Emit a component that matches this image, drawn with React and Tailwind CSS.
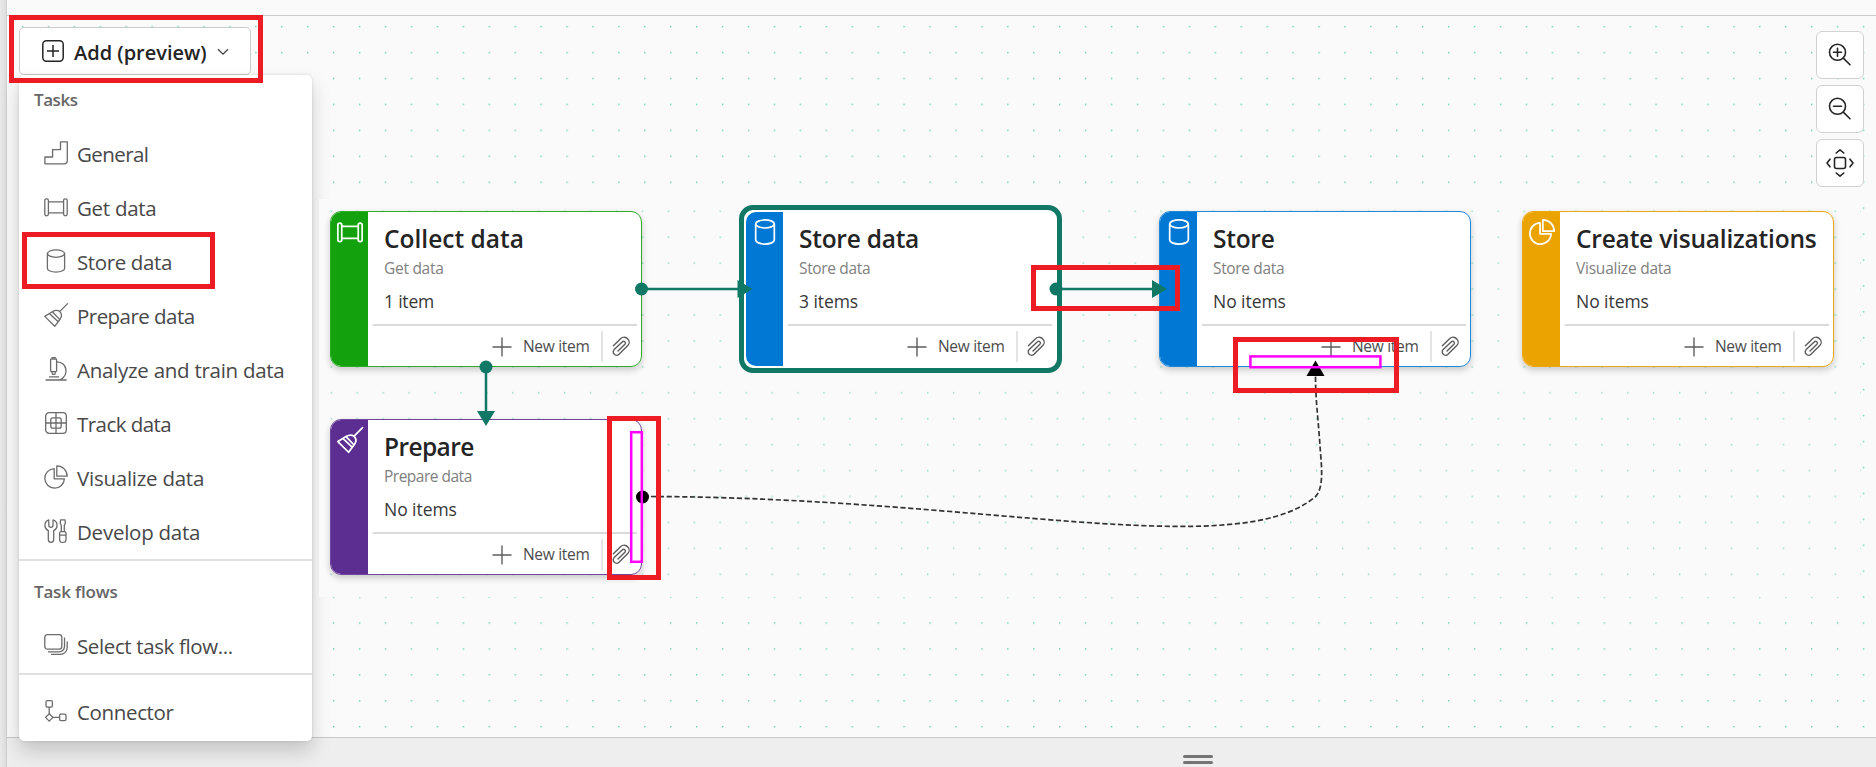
const Svg = ({ size = 24, sw = 1.3, children, className = "" }) => (
  <svg width={size} height={size} viewBox="0 0 24 24" fill="none" stroke="currentColor" strokeWidth={sw} strokeLinejoin="round" className={`shrink-0 overflow-visible ${className}`}>
    {children}
  </svg>
);

const shapes = {
  general: <path d="M16.5.8H23.3V19.5a3.3 3.3 0 0 1-3.3 3.3H.9V16H8.6V8.6H16.5Z" />,
  get: (
    <>
      <rect x=".8" y="3.8" width="3.6" height="17" rx="1.7" />
      <rect x="19.6" y="3.8" width="3.6" height="17" rx="1.7" />
      <path d="M4.4 6.8H19.6M4.4 17.8H19.6" />
    </>
  ),
  store: (
    <>
      <ellipse cx="12" cy="4.6" rx="8.6" ry="3.7" />
      <path d="M3.4 4.6V19.4c0 2 3.9 3.7 8.6 3.7s8.6-1.7 8.6-3.7V4.6" />
    </>
  ),
  prepare: (
    <>
      <path d="M23.6.6 15.8 8.4" strokeLinecap="round" />
      <path d="M.8 13.4 8.3 8.8C11.2 7 14 7.2 15.8 8.6c2 2 2 5 .4 7.4L10.7 23.3Z" />
      <path d="M5.4 10.6 14.2 18.8" />
      <path d="M8.3 8.8 15.8 16.6" />
    </>
  ),
  analyze: (
    <>
      <rect x="6.6" y="2" width="6" height="12.6" rx=".8" />
      <path d="M7.5.7H11.8M7.8 14.8 8.6 17.4H10.8L11.4 14.8M5 19.8H15M1.6 23H22.6M12.8 4.8C23.6 5.4 25 17.6 16.4 22.8" />
    </>
  ),
  track: (
    <>
      <rect x="1.7" y="1.7" width="20.6" height="20.6" rx="3.4" />
      <rect x="6.8" y="6.8" width="10.4" height="10.4" rx="2" />
      <path d="M12 1.7V22.3M1.7 12H22.3" />
    </>
  ),
  visualize: (
    <>
      <path d="M10.2 3.6A9.8 9.8 0 1 0 20.4 13.8H10.2Z" />
      <path d="M12.8.8A10.4 10.4 0 0 1 23.2 11.2H12.8Z" />
    </>
  ),
  develop: (
    <>
      <path d="M4.8.9V6.2a2.1 2.1 0 0 0 4.2 0V.9C11.6 1.8 13.1 4 13.1 6.4c0 2.3-1.2 4-3.4 5.2v9a2.7 2.7 0 0 1-5.4 0v-9C2.1 10.4.9 8.7.9 6.4.9 4 2.3 1.8 4.8.9Z" />
      <path d="M16.6.8H21L21.4 4.4 20.3 6V12.6H17.3V6L16.2 4.4ZM15.6 14.2q0-1.6 1.6-1.6h3.2q1.6 0 1.6 1.6v6a3.2 3.2 0 0 1-6.4 0ZM15.6 16.2H22" />
    </>
  ),
  select: (
    <>
      <rect x=".8" y="1.7" width="17" height="14.4" rx="2.6" />
      <path d="M20.5 4.6V13.6a5.2 5.2 0 0 1-5.2 5.2H4M23.2 8.4V14.6a6.8 6.8 0 0 1-6.8 6.8H7" />
    </>
  ),
  connector: (
    <>
      <rect x="2" y="1.7" width="6.4" height="6.4" rx="1.4" />
      <rect x="15.6" y="15.2" width="6.4" height="6.4" rx="1.4" />
      <path d="M5.2 8.1V14.7M8.9 18.4H15.6M5.2 14.7 8.9 18.4 5.2 22.1 1.5 18.4Z" />
    </>
  ),
};

const tasks = [
  ["general", "General", "tracking-[-0.57px]"],
  ["get", "Get data", "tracking-[-0.28px]"],
  ["store", "Store data", "tracking-[-0.37px]"],
  ["prepare", "Prepare data", "tracking-[-0.54px]"],
  ["analyze", "Analyze and train data", "tracking-[-0.27px]"],
  ["track", "Track data", "tracking-[-0.55px]"],
  ["visualize", "Visualize data", "tracking-[-0.25px]"],
  ["develop", "Develop data", "tracking-[-0.25px]"],
];

const MenuItem = ({ icon, label, tracking }) => (
  <div className="flex h-[54px] shrink-0 items-center gap-[9px] pl-[25px] text-[20.5px] text-[#484848]">
    <Svg className="mb-[3px] text-[#6b6b6b]">{shapes[icon]}</Svg>
    <span className={`whitespace-nowrap ${tracking}`}>{label}</span>
  </div>
);

const Menu = () => (
  <div className="absolute left-[19px] top-[75px] flex h-[666px] w-[293px] flex-col rounded-[5px] bg-white shadow-[0_0_3px_rgba(0,0,0,0.14),0_10px_20px_rgba(0,0,0,0.18)]">
    <div className="flex h-[52px] shrink-0 items-start pl-[15px] pt-[13px] text-[17px] font-semibold leading-[24px] tracking-[-0.45px] text-[#666]">Tasks</div>
    {tasks.map(([icon, label, tracking]) => (
      <MenuItem key={icon} icon={icon} label={label} tracking={tracking} />
    ))}
    <div className="h-[2px] shrink-0 bg-[#e0e0e0]" />
    <div className="flex h-[58px] shrink-0 items-center pl-[15px] pt-[3px] text-[17px] font-semibold tracking-[-0.18px] text-[#666]">Task flows</div>
    <MenuItem icon="select" label="Select task flow..." tracking="tracking-[-0.38px]" />
    <div className="h-[2px] shrink-0 bg-[#e0e0e0]" />
    <div className="pt-[10px]">
      <MenuItem icon="connector" label="Connector" tracking="tracking-[-0.35px]" />
    </div>
  </div>
);

const Clip = () => (
  <svg width="19" height="21" viewBox="0 0 19 21" fill="none" stroke="#5c5c5c" strokeWidth="1.4" strokeLinecap="round">
    <path d="M1.4 9.8 8.8 2.6A4.6 4.6 0 0 1 15.8 3a4.7 4.7 0 0 1 0 6.6L7 18.3A3.3 3.3 0 0 1 2.2 13.6L10.4 5.800a1.700 1.700 0 0 1 2.500 2.400L6 15" />
  </svg>
);

const Card = ({ icon, stripe, border, title, titleTracking, sub, subTracking, items, itemsTracking }) => (
  <div className={`flex h-[156px] w-[312px] overflow-hidden rounded-[11px] border bg-white ${border}`}>
    <div className={`flex w-[37px] shrink-0 justify-center pt-[7px] text-white ${stripe}`}>
      <Svg size={26} sw={1.6}>{shapes[icon]}</Svg>
    </div>
    <div className="flex min-w-0 flex-1 flex-col whitespace-nowrap">
      <div className={`pl-[16px] pt-[11px] text-[24.5px] font-semibold leading-[32px] text-[#242424] ${titleTracking}`}>{title}</div>
      <div className={`mt-[3px] pl-[16px] text-[15.5px] leading-[20px] text-[#808080] ${subTracking}`}>{sub}</div>
      <div className={`mt-[10.500px] pl-[16px] text-[17.5px] leading-[24px] text-[#383838] ${itemsTracking}`}>{items}</div>
      <div className="ml-[5px] mr-[4px] mt-[11.500px] h-[2px] shrink-0 bg-[#dadada]" />
      <div className="flex flex-1 items-center justify-end pr-[10px] pt-[1px]">
        <svg width="20" height="20" viewBox="0 0 20 20" stroke="#5c5c5c" strokeWidth="1.4"><path d="M10 .5V19.5M.5 10H19.5" /></svg>
        <span className="ml-[11px] w-[66px] text-[15.5px] tracking-[-0.3px] text-[#4c4c4c]">New item</span>
        <div className="ml-[12px] mr-[9px] h-[31px] w-[2px] bg-[#e4e4e4]" />
        <Clip />
      </div>
    </div>
  </div>
);

const shadow = "shadow-[0_3px_7px_rgba(0,0,0,0.2)] rounded-[11px]";

const Dots = ({ id, x, y, color, w = 1.4, h = 1.4 }) => (
  <svg className="absolute inset-0 h-full w-full">
    <pattern id={id} x={x} y={y} width="25.93" height="25.93" patternUnits="userSpaceOnUse">
      <rect width={w} height={h} fill={color} />
    </pattern>
    <rect width="100%" height="100%" fill={`url(#${id})`} />
  </svg>
);

const ToolButton = ({ children }) => (
  <div className="flex size-[48px] items-center justify-center rounded-[6px] border border-[#d1d1d1] bg-white">
    <svg width="30" height="30" viewBox="0 0 30 30" fill="none" stroke="#242424" strokeWidth="1.6" strokeLinecap="round" strokeLinejoin="round">{children}</svg>
  </div>
);

export default function App() {
  return (
    <div className="relative flex h-[767px] w-[1876px] overflow-hidden bg-[#fafafa] font-['Open_Sans','Noto_Sans',sans-serif]">
      <div className="w-[7px] shrink-0 border-r border-[#cfcfcf] bg-linear-to-r from-[#e9e9e9] to-[#dedede]" />
      <div className="flex min-w-0 flex-1 flex-col">
        <div className="h-[16px] shrink-0 border-b border-[#cccccc]" />
        <div className="relative flex-1 overflow-hidden">
          <Dots id="grid" x={14.8} y={9.9} color="#66d2ac" />
        </div>
        <div className="h-[30px] shrink-0 border-t border-[#c8c8c8] bg-[#eeeeee] pl-[1176px] pt-[17px]">
          <div className="h-[3px] w-[30px] rounded-full bg-[#747474]" />
          <div className="mt-[3px] h-[3px] w-[30px] rounded-full bg-[#747474]" />
        </div>
      </div>

      <div className="absolute left-[19px] top-[27px] flex h-[48px] w-[232px] items-center rounded-[5px] border border-[#cccccc] bg-white pl-[22px]">
        <svg width="22" height="22" viewBox="0 0 22 22" fill="none" stroke="#242424" strokeWidth="1.5">
          <rect x=".8" y=".8" width="20.4" height="20.4" rx="3.6" />
          <path d="M11 5V17M5 11H17" />
        </svg>
        <span className="ml-[10px] mt-[4px] w-[134px] whitespace-nowrap text-[20px] font-semibold text-[#242424]">Add (preview)</span>
        <svg className="ml-[9px] mt-[2px]" width="12" height="8" viewBox="0 0 12 8" fill="none" stroke="#424242" strokeWidth="1.3"><path d="M1 1.2 6 6.2 11 1.2" /></svg>
      </div>

      <Menu />

      <div className="absolute left-[319px] top-[199px] h-[398px] w-[1542px] overflow-hidden bg-[#fafafa]">
        <Dots id="patch" x={11.6} y={11.3} color="#a8e3cf" w={1.4} h={2} />
      </div>

      <div className="absolute right-[12px] top-[31px] flex flex-col gap-[6px]">
        <ToolButton>
          <circle cx="12.5" cy="12.3" r="8" />
          <path d="M18.3 18.1 25 24.8M12.5 8.3V16.3M8.5 12.3H16.5" />
        </ToolButton>
        <ToolButton>
          <circle cx="12.5" cy="12.3" r="8" />
          <path d="M18.3 18.1 25 24.8M8.5 12.3H16.5" />
        </ToolButton>
        <ToolButton>
          <rect x="9.5" y="9.5" width="11" height="11" rx="2" />
          <path d="M11.2 5 15 1.8 18.8 5M11.2 25 15 28.2 18.8 25M5 11.2 2 15 5 18.8M25 11.2 28 15 25 18.8" />
        </ToolButton>
      </div>

      <div className={`absolute left-[330px] top-[211px] ${shadow}`}>
        <Card icon="get" stripe="bg-[#13a10e]" border="border-[#2fab2a]" title="Collect data" titleTracking="" sub="Get data" subTracking="tracking-[-0.28px]" items="1 item" itemsTracking="tracking-[-0.2px]" />
      </div>
      <div className={`absolute left-[330px] top-[419px] ${shadow}`}>
        <Card icon="prepare" stripe="bg-[#5c2e91]" border="border-[#6f459d]" title="Prepare" titleTracking="tracking-[-0.6px]" sub="Prepare data" subTracking="tracking-[-0.5px]" items="No items" itemsTracking="tracking-[-0.05px]" />
      </div>
      <div className="absolute left-[739px] top-[205px] rounded-[14px] border-[5px] border-[#117865] bg-white py-[1px] pl-[1px]">
        <Card icon="store" stripe="bg-[#0078d4]" border="border-white" title="Store data" titleTracking="tracking-[-0.25px]" sub="Store data" subTracking="tracking-[-0.35px]" items="3 items" itemsTracking="tracking-[-0.08px]" />
      </div>
      <div className={`absolute left-[1159px] top-[211px] ${shadow}`}>
        <Card icon="store" stripe="bg-[#0078d4]" border="border-[#1f87d8]" title="Store" titleTracking="tracking-[-0.25px]" sub="Store data" subTracking="tracking-[-0.35px]" items="No items" itemsTracking="tracking-[-0.05px]" />
      </div>
      <div className={`absolute left-[1522px] top-[211px] ${shadow}`}>
        <Card icon="visualize" stripe="bg-[#eaa300]" border="border-[#eca818]" title="Create visualizations" titleTracking="tracking-[-0.2px]" sub="Visualize data" subTracking="tracking-[-0.23px]" items="No items" itemsTracking="tracking-[-0.05px]" />
      </div>

      <svg className="absolute inset-0" width="1876" height="767" viewBox="0 0 1876 767" fill="none">
        <path d="M642 289H740M1056 289H1153M486 367V412" stroke="#117865" strokeWidth="2.5" />
        <g fill="#117865">
          <circle cx="641.5" cy="289" r="6.5" />
          <circle cx="1056" cy="289" r="6.5" />
          <circle cx="486" cy="367" r="6.5" />
          <path d="M737.5 280 752.5 289 737.5 298ZM1152 280 1167 289 1152 298ZM477 411H495L486 426Z" />
        </g>
        <path d="M643 496.5C979 496.5 1235 563.5 1315 497C1325 488 1321 462 1320 446C1318 416 1315.5 400 1315.5 376" stroke="#333" strokeWidth="1.7" strokeDasharray="5.2 2.6" />
        <circle cx="642.5" cy="497" r="6.5" fill="#000" />
        <path d="M1306.5 376H1324.5L1315.5 360.5Z" fill="#000" />
        <g stroke="#ff00ff" strokeWidth="2.5">
          <rect x="631.2" y="432.2" width="10.6" height="129.6" />
          <rect x="1250.4" y="356.4" width="130" height="10.8" />
        </g>
      </svg>

      <div className="absolute left-[9px] top-[15px] h-[68px] w-[254px] border-[5px] border-[#ed1c24]" />
      <div className="absolute left-[22px] top-[232px] h-[57px] w-[193px] border-[5px] border-[#ed1c24]" />
      <div className="absolute left-[1031px] top-[265px] h-[46px] w-[149px] border-[5px] border-[#ed1c24]" />
      <div className="absolute left-[1233px] top-[337px] h-[56px] w-[166px] border-[5px] border-[#ed1c24]" />
      <div className="absolute left-[607px] top-[416px] h-[164px] w-[54px] border-[5px] border-[#ed1c24]" />
    </div>
  );
}
